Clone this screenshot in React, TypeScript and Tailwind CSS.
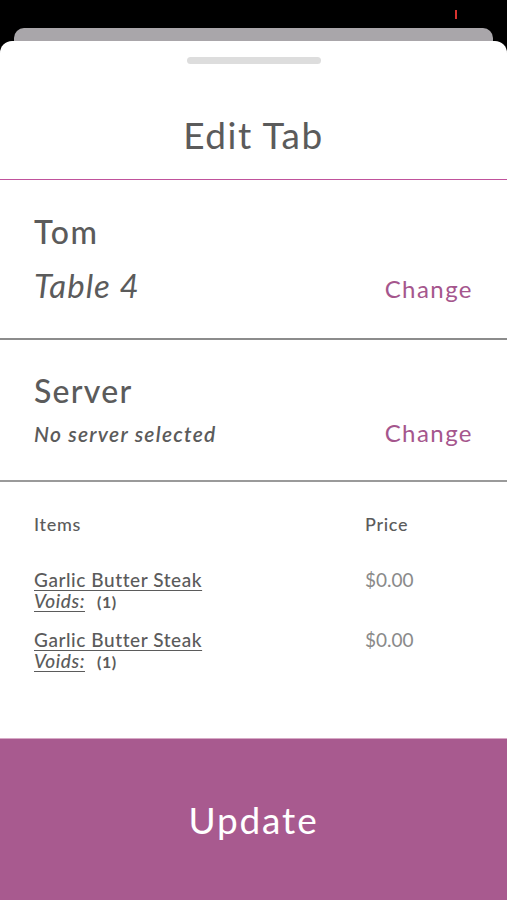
import React from "react";

const items = [
  { id: 1, name: "Garlic Butter Steak", voids: 1, price: "$0.00" },
  { id: 2, name: "Garlic Butter Steak", voids: 1, price: "$0.00" },
];

export default function App() {
  return (
    <div className="relative w-[507px] h-[900px] bg-black flex flex-col overflow-hidden font-['Lato','Open_Sans',sans-serif] text-[#5b5b5b]">
      {/* status bar */}
      <div className="h-[28px] shrink-0" />
      <span className="absolute left-[455px] top-[10px] w-[2px] h-[9px] bg-[#d8332f]" />

      {/* card behind */}
      <div className="mx-[14px] h-[25px] shrink-0 rounded-t-[10px] bg-[#a9a6aa]" />

      {/* sheet */}
      <div className="-mt-[12px] flex-1 flex flex-col bg-white rounded-t-[12px] overflow-hidden">
        {/* header */}
        <div className="h-[138px] shrink-0 flex flex-col items-center">
          <div className="mt-[16px] w-[134px] h-[7px] rounded-full bg-[#dddddd]" />
          <h1 className="mt-[52px] text-[37px] leading-none tracking-[0.04em]">Edit Tab</h1>
        </div>
        <div className="h-[1px] shrink-0 bg-[#c0529c]" />

        {/* table */}
        <div className="h-[160px] shrink-0 px-[34px] pt-[36px] border-b-2 border-[#8c8c8c]">
          <div className="text-[32px] leading-none font-medium tracking-[0.05em]">Tom</div>
          <div className="mt-[21px] flex items-baseline justify-between">
            <span className="text-[33px] leading-none italic tracking-[0.03em]">Table 4</span>
            <button className="text-[24px] leading-none text-[#a5568d] tracking-[0.06em]">Change</button>
          </div>
        </div>

        {/* server */}
        <div className="h-[142px] shrink-0 px-[34px] pt-[35px] border-b-2 border-[#9a9a9a]">
          <div className="text-[32px] leading-none font-medium tracking-[0.04em]">Server</div>
          <div className="mt-[14px] flex items-baseline justify-between">
            <span className="text-[21px] leading-none italic font-semibold tracking-[0.06em]">No server selected</span>
            <button className="text-[24px] leading-none text-[#a5568d] tracking-[0.06em]">Change</button>
          </div>
        </div>

        {/* items */}
        <div className="flex-1 px-[34px] pt-[33px]">
          <div className="grid grid-cols-[331px_1fr] text-[18px] leading-none font-medium tracking-[0.04em]">
            <span>Items</span>
            <span>Price</span>
          </div>
          <div className="mt-[36px] flex flex-col gap-[17px]">
            {items.map((item) => (
              <div key={item.id} className="grid grid-cols-[331px_1fr]">
                <div className="flex flex-col text-[19px] leading-[21px] tracking-[0.03em]">
                  <span className="font-medium underline underline-offset-[3px]">{item.name}</span>
                  <span className="flex items-baseline gap-[12px]">
                    <span className="italic font-medium underline underline-offset-[3px]">Voids:</span>
                    <span className="text-[16px] font-bold">({item.voids})</span>
                  </span>
                </div>
                <span className="text-[19px] leading-[21px] text-[#8a8a8a]">{item.price}</span>
              </div>
            ))}
          </div>
        </div>

        {/* update */}
        <button className="h-[162px] shrink-0 w-full bg-[#a85a8f] border-t border-[#d7a9c6] text-white text-[37px] font-normal tracking-[0.05em]">
          Update
        </button>
      </div>
    </div>
  );
}
